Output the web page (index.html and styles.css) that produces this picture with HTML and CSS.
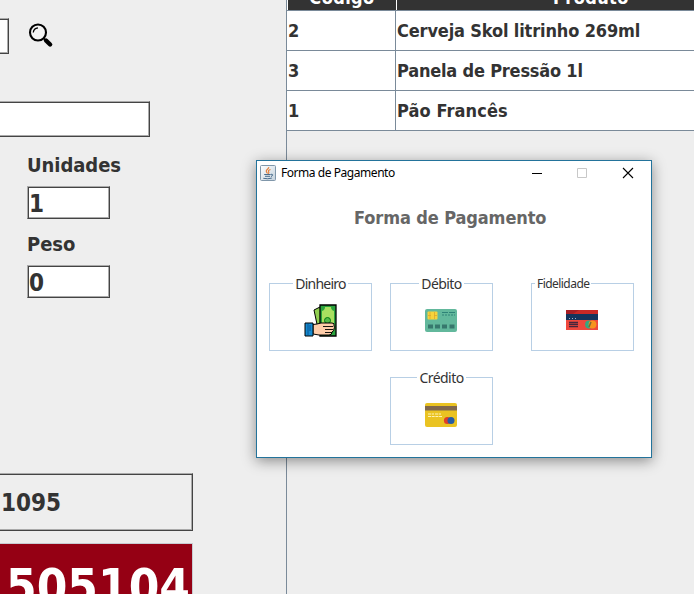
FILE: index.html
```
<!DOCTYPE html>
<html lang="pt-BR">
<head>
<meta charset="utf-8">
<title>Forma de Pagamento</title>
<link rel="stylesheet" href="styles.css">
</head>
<body>
<div class="app">
  <section class="form">
    <div class="search">
      <div class="field code"></div>
      <svg class="lens" width="26" height="26" viewBox="0 0 26 26"><circle cx="10" cy="9.500" r="8" fill="#f4f4f4" stroke="#000" stroke-width="2.1"/><path d="M5.3 9.500Q5.6 5.300 10 4.800" fill="none" stroke="#000" stroke-width="1.3"/><path d="M15.5 15.300l2 2" stroke="#000" stroke-width="1.500"/><path d="M18 17.500l4.100 4" stroke="#000" stroke-width="4.400" stroke-linecap="round"/></svg>
    </div>
    <div class="field name"></div>
    <div class="label"><span class="units">Unidades</span></div>
    <div class="field small"><span>1</span></div>
    <div class="label">Peso</div>
    <div class="field small"><span>0</span></div>
    <div class="field change"><span>1095</span></div>
    <div class="total"><span>505104</span></div>
  </section>
  <section class="items">
    <div class="row head"><div class="cell"><span class="h1">Código</span></div><div class="cell"><span class="h2">Produto</span></div></div>
    <div class="row"><div class="cell">2</div><div class="cell"><span class="p1">Cerveja Skol litrinho 269ml</span></div></div>
    <div class="row"><div class="cell">3</div><div class="cell"><span class="p2">Panela de Pressão 1l</span></div></div>
    <div class="row"><div class="cell">1</div><div class="cell"><span class="p3">Pão Francês</span></div></div>
  </section>
</div>
<div class="dialog">
  <header class="bar">
    <svg width="16" height="16" viewBox="0 0 16 16"><defs><linearGradient id="g" x2="1" y2="1"><stop stop-color="#fff"/><stop offset="1" stop-color="#c3d1dc"/></linearGradient></defs><rect x=".5" y=".5" width="15" height="15" rx="1" fill="url(#g)" stroke="#8097aa"/><path d="M8.7 2.2C9.2 4 5.8 4.5 6.3 6.3Q6.6 7.4 7.6 8.4M10.5 4.5C8 5.5 8.1 6 8.8 7Q9.2 7.8 8.1 8.8" fill="none" stroke="#e4803c" stroke-width="1.2"/><path d="M4.2 9.5h6.5M5 11.3h5M3.3 13.3q4.5 1 8.5-.2M11 9.3q2.7-.2 1 1.7l-1 .5" fill="none" stroke="#496d8d"/></svg>
    <span class="caption">Forma de Pagamento</span>
    <svg class="controls" width="102" height="12" viewBox="0 0 102 12"><path d="M0 6.5h10" stroke="#000"/><path d="M45.500 1.500h9v9h-9z" fill="none" stroke="#c8c8c8"/><path d="M91 1l10 10M101 1L91 11" stroke="#000" stroke-width="1.1"/></svg>
  </header>
  <h1><span>Forma de Pagamento</span></h1>
  <div class="options">
    <fieldset class="money"><legend><span>Dinheiro</span></legend>
      <svg width="33" height="33" viewBox="0 0 33 33"><path d="M10 6l6-3 4 19-6 3z" fill="#91cf50" stroke="#000"/><path d="M16 1h16v31H16z" fill="#2aa33c" stroke="#000" stroke-width="1.3"/><path d="M21 3h6q0 3 3 4v18q-3 1-3 5h-6q0-4-3-5V7q3-1 3-4z" fill="#a9df60"/><circle cx="23.500" cy="16.500" r="3" fill="#55b947" stroke="#071"/><path d="M9 20.500l4-.5 4-1h11q3 0 2 3 1 1 0 3 0 2-2 3 0 3-3 3H15l-6-1z" fill="#ffcda9" stroke="#000"/><path d="M19 22.500h10M21 25.500h8M21 28.500h7" stroke="#000" stroke-width=".9"/><path d="M1 19h8v13H1z" fill="#168bd0" stroke="#000"/><path d="M4 20v11M6 21v6" stroke="#075596"/></svg>
    </fieldset>
    <fieldset class="debit"><legend><span>Débito</span></legend>
      <svg width="32" height="24" viewBox="0 0 32 24"><rect width="32" height="23" rx="2" fill="#62b89c"/><rect x="2.500" y="2.500" width="10" height="8" rx="1" fill="#f6d33b"/><path d="M5 3v7M9.500 3v7M3 6.500h3M9 6.500h3" stroke="#dca92d" stroke-width=".8"/><path d="M17 3.500h6M24 3.500h6" stroke="#2e8277"/><path d="M17 6h13" stroke="#2e8277" stroke-dasharray="2 1"/><path d="M3 17.500h5M10 17.500h5M17 17.500h5M24.500 17.500h5" stroke="#37786d" stroke-width="4"/></svg>
    </fieldset>
    <fieldset class="loyal"><legend><span>Fidelidade</span></legend>
      <svg width="32" height="20" viewBox="0 0 32 20"><path fill="#ef483d" d="M0 0h32v20H0z"/><path d="M0 0h32v4H0z" fill="#c82925"/><path d="M0 0h13l-6 4H0z" fill="#a91e23"/><path d="M0 4h32v6H0z" fill="#14345c"/><path d="M3 8.500h8" stroke="#a1b4cc" stroke-dasharray="1 2"/><path d="M3 12.500h9M3 14.500h9M3 16.700h9" stroke="#47263c" stroke-width="1.3"/><circle cx="23" cy="14.500" r="3.900" fill="#35a881"/><circle cx="26.500" cy="14.500" r="3.900" fill="#f7941e"/><path d="M25 12l-2 5" stroke="#7c6735" stroke-width="1.5"/></svg>
    </fieldset>
    <fieldset class="credit"><legend><span>Crédito</span></legend>
      <svg width="32" height="24" viewBox="0 0 32 24"><rect width="32" height="24" rx="2" fill="#eac322"/><path d="M0 3h32v4.500H0z" fill="#80684d"/><path d="M3 11h6M10 11h6M3 13.500h14" stroke="#fff3b5" stroke-dasharray="3 .7"/><circle cx="22.400" cy="17.500" r="3.500" fill="#df3f29"/><circle cx="26" cy="17.500" r="3.500" fill="#245ca5"/></svg>
    </fieldset>
  </div>
</div>
</body>
</html>
```
FILE: styles.css
```
* { box-sizing: border-box; }
body {
  margin: 0;
  width: 694px;
  height: 594px;
  overflow: hidden;
  background: #eee;
  color: #333;
  font: bold 18px/1 "DejaVu Sans Condensed", "DejaVu Sans", sans-serif;
  font-stretch: condensed;
}
span { display: inline-block; white-space: nowrap; }
.app { display: flex; width: 694px; height: 594px; overflow: hidden; }
.form { width: 286px; flex: none; padding-top: 18px; }
.search { display: flex; height: 36px; }
.lens { margin: 5px 0 0 19px; }
.field {
  background: #fff;
  border: 1px solid #444;
  border-top-color: #aaa;
  box-shadow: inset 0 1px #444, inset -1px -1px #aaa;
}
.code { width: 9px; height: 36px; border-left: 0; }
.name { width: 150px; height: 36px; margin-top: 47px; border-left: 0; }
.label { height: 49px; padding: 18px 0 0 27px; font-size: 20px; line-height: 20px; letter-spacing: -.05px; }
.small { width: 83px; height: 33px; margin-left: 27px; padding: 4px 0 0 1px; font-size: 24px; line-height: 26px; border-left-color: #aaa; box-shadow: inset 1px 1px #444, inset -1px -1px #aaa; }
.small + .label { height: 46px; padding-top: 15px; }
.change { width: 193px; height: 58px; margin-top: 175px; background: #eee; padding: 15px 0 0 1px; font-size: 24px; line-height: 28px; border-left: 0; }
.total { width: 193px; height: 80px; margin-top: 12px; border: solid #c8ccd2; border-width: 1px 1px 0 0; background: #950014; color: #fff; padding: 18px 2px 0 0; text-align: right; font-size: 49px; line-height: 52px; }
.items { flex: 1; border-left: 1px solid #7a8a99; }
.row { display: grid; grid-template-columns: 109px 299px; height: 40px; background: #fff; border-bottom: 1px solid #7a8a99; line-height: 39px; }
.cell { border-right: 1px solid #7a8a99; padding-left: 1px; white-space: nowrap; }
.p1 { letter-spacing: -.15px; }
.p2 { letter-spacing: -.2px; }
.p3 { letter-spacing: .1px; }
.head { height: 11px; background: #333; color: #fff; line-height: 20px; }
.head .cell { border-left: 1px solid #fff; border-right: 0; height: 10px; overflow: hidden; text-align: center; padding: 0; }
.head .cell span { display: block; margin-top: -12px; letter-spacing: .4px; }
.head .cell:last-child { text-align: left; padding-left: 156px; }
.dialog {
  position: absolute;
  left: 256px;
  top: 160px;
  width: 396px;
  height: 298px;
  background: #fff;
  border: 1px solid #23739b;
  box-shadow: 0 3px 13px rgba(0,0,0,.42);
}
.bar { height: 31px; display: flex; padding: 4px 17px 0 3px; font: 12px/16px "Noto Sans", sans-serif; color: #000; }
.caption { margin-left: 5px; letter-spacing: -.45px; }
.controls { margin: 2px 0 0 auto; }
h1 { margin: 15px 0 0 97px; height: 22px; font-size: 18px; line-height: 22px; color: #666; letter-spacing: -.1px; }
.options { display: grid; grid-template-columns: 103px 103px 103px; column-gap: 18px; row-gap: 18px; padding: 46px 0 0 12px; font: 14px/18px "Noto Sans", sans-serif; color: #333; }
fieldset { margin: 0; padding: 0; min-width: 0; width: 103px; height: 76px; border: 1px solid #b8cfe5; }
legend { margin: 0 auto; padding: 0 2px; height: 16px; letter-spacing: -.75px; }
.debit legend, .credit legend { letter-spacing: -.55px; }
fieldset svg { display: block; }
.money svg { margin: 13px 0 0 34px; }
.debit svg { margin: 18px 0 0 34px; }
.credit svg { margin: 18px 0 0 34px; }
.loyal { margin-left: 20px; }
.loyal legend { margin-left: 3px; font-size: 12px; letter-spacing: -.55px; }
.loyal legend span { line-height: 15px; }
.loyal svg { margin: 19px 0 0 34px; }
.credit { grid-column: 2; }
```
